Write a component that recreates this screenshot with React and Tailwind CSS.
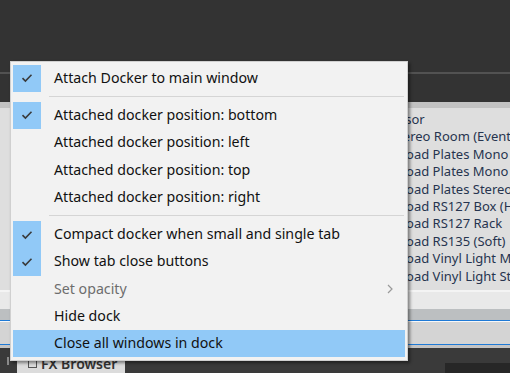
import React from 'react';

const listRows = [
  'ssor',
  'Stereo Room (Events)',
  'Road Plates Mono 1',
  'Road Plates Mono 2',
  'Road Plates Stereo',
  'Road RS127 Box (Hall)',
  'Road RS127 Rack',
  'Road RS135 (Soft)',
  'Road Vinyl Light Mono',
  'Road Vinyl Light Stereo',
];

const menuItems = [
  { label: 'Attach Docker to main window', checked: true },
  { sep: true },
  { label: 'Attached docker position: bottom', checked: true },
  { label: 'Attached docker position: left' },
  { label: 'Attached docker position: top' },
  { label: 'Attached docker position: right' },
  { sep: true },
  { label: 'Compact docker when small and single tab', checked: true },
  { label: 'Show tab close buttons', checked: true },
  { label: 'Set opacity', disabled: true, submenu: true },
  { label: 'Hide dock' },
  { label: 'Close all windows in dock', active: true },
];

function Check() {
  return (
    <svg width="12" height="10" viewBox="0 0 12 10" fill="none">
      <path d="M1.5 5.2 L4.4 8 L10.5 1.8" stroke="#3a3a3a" strokeWidth="1.6" />
    </svg>
  );
}

function MenuRow({ item }) {
  if (item.sep) {
    return (
      <div className="h-[10px] flex items-center pl-[38px] pr-[3px]">
        <div className="h-px w-full bg-[#d5d5d5]" />
      </div>
    );
  }
  return (
    <div
      className={
        'h-[27.3px] flex items-center mx-[2px] ' + (item.active ? 'bg-[#91c9f7]' : '')
      }
    >
      <div
        className={
          'w-[28px] h-full flex items-center justify-center ' +
          (item.checked ? 'bg-[#91c9f7]' : '')
        }
      >
        {item.checked && <Check />}
      </div>
      <span
        className={
          'ml-[13px] flex-1 text-[14.2px] leading-[18px] -mt-[1px] ' +
          (item.disabled ? 'text-[#6d6d6d]' : 'text-[#111]')
        }
      >
        {item.label}
      </span>
      {item.submenu && (
        <svg width="6" height="10" viewBox="0 0 6 10" className="mr-[12px]">
          <path d="M1 1 L5 5 L1 9" stroke="#9a9a9a" strokeWidth="1.2" fill="none" />
        </svg>
      )}
    </div>
  );
}

export default function App() {
  return (
    <div className="relative w-[510px] h-[373px] overflow-hidden bg-[#333333] font-['Segoe_UI','Noto_Sans',sans-serif]">
      {/* top dark area */}
      <div className="h-[102px] flex flex-col">
        <div className="h-[72px]" />
        <div className="h-[2px] bg-[#525252]" />
      </div>

      {/* docker panel */}
      <div className="h-[246px] flex">
        <div className="w-[4px] bg-[#2e2e2e]" />
        <div className="flex-1 flex flex-col">
          <div className="h-[6px] bg-[#c2c2c2]" />
          <div className="h-[182px] bg-[#dedede] pt-[3px] overflow-hidden">
            {listRows.map((r, i) => (
              <div
                key={i}
                className={
                  'h-[17.4px] leading-[17.4px] text-[13px] whitespace-nowrap text-[#26344f] ' +
                  (i === 0 ? 'pl-[399px]' : i === 1 ? 'pl-[391px]' : 'pl-[398px]')
                }
              >
                {r}
              </div>
            ))}
          </div>
          <div className="h-[2px] bg-[#f4f4f4]" />
          <div className="h-[17px] bg-[#e9e9e9]" />
          <div className="h-[11px] bg-[#bcbfc1]" />
          <div className="h-px bg-[#1f7ad6]" />
          <div className="h-px bg-[#f8f8f8]" />
          <div className="h-[22px] bg-[#d4d4d4]" />
          <div className="h-px bg-[#1f7ad6]" />
          <div className="h-[3px] bg-[#c4c4c4]" />
        </div>
      </div>

      {/* bottom tab bar */}
      <div className="h-[25px] flex bg-[#3a3a3a]">
        <div className="w-[17px] flex items-start pt-[9px] pl-[7px]">
          <div className="w-[2px] h-[8px] bg-[#8a8a8a]" />
        </div>
        <div className="w-[108px] mt-[6px] bg-[#dcdcdc] flex items-center pl-[11px] gap-[4px]">
          <div className="w-[9px] h-[9px] border border-[#555]" />
          <span className="text-[14px] font-semibold text-[#333]">FX Browser</span>
        </div>
        <div className="flex-1" />
        <div className="w-[65px] mt-[15px] bg-[#272727]" />
      </div>

      {/* context menu */}
      <div className="absolute left-[10px] top-[61px] w-[398px] h-[300px] bg-[#f2f2f2] border border-[#d0d0d0] shadow-[2px_2px_3px_rgba(0,0,0,0.45)] pt-[2.5px]">
        {menuItems.map((item, i) => (
          <MenuRow key={i} item={item} />
        ))}
      </div>
    </div>
  );
}
